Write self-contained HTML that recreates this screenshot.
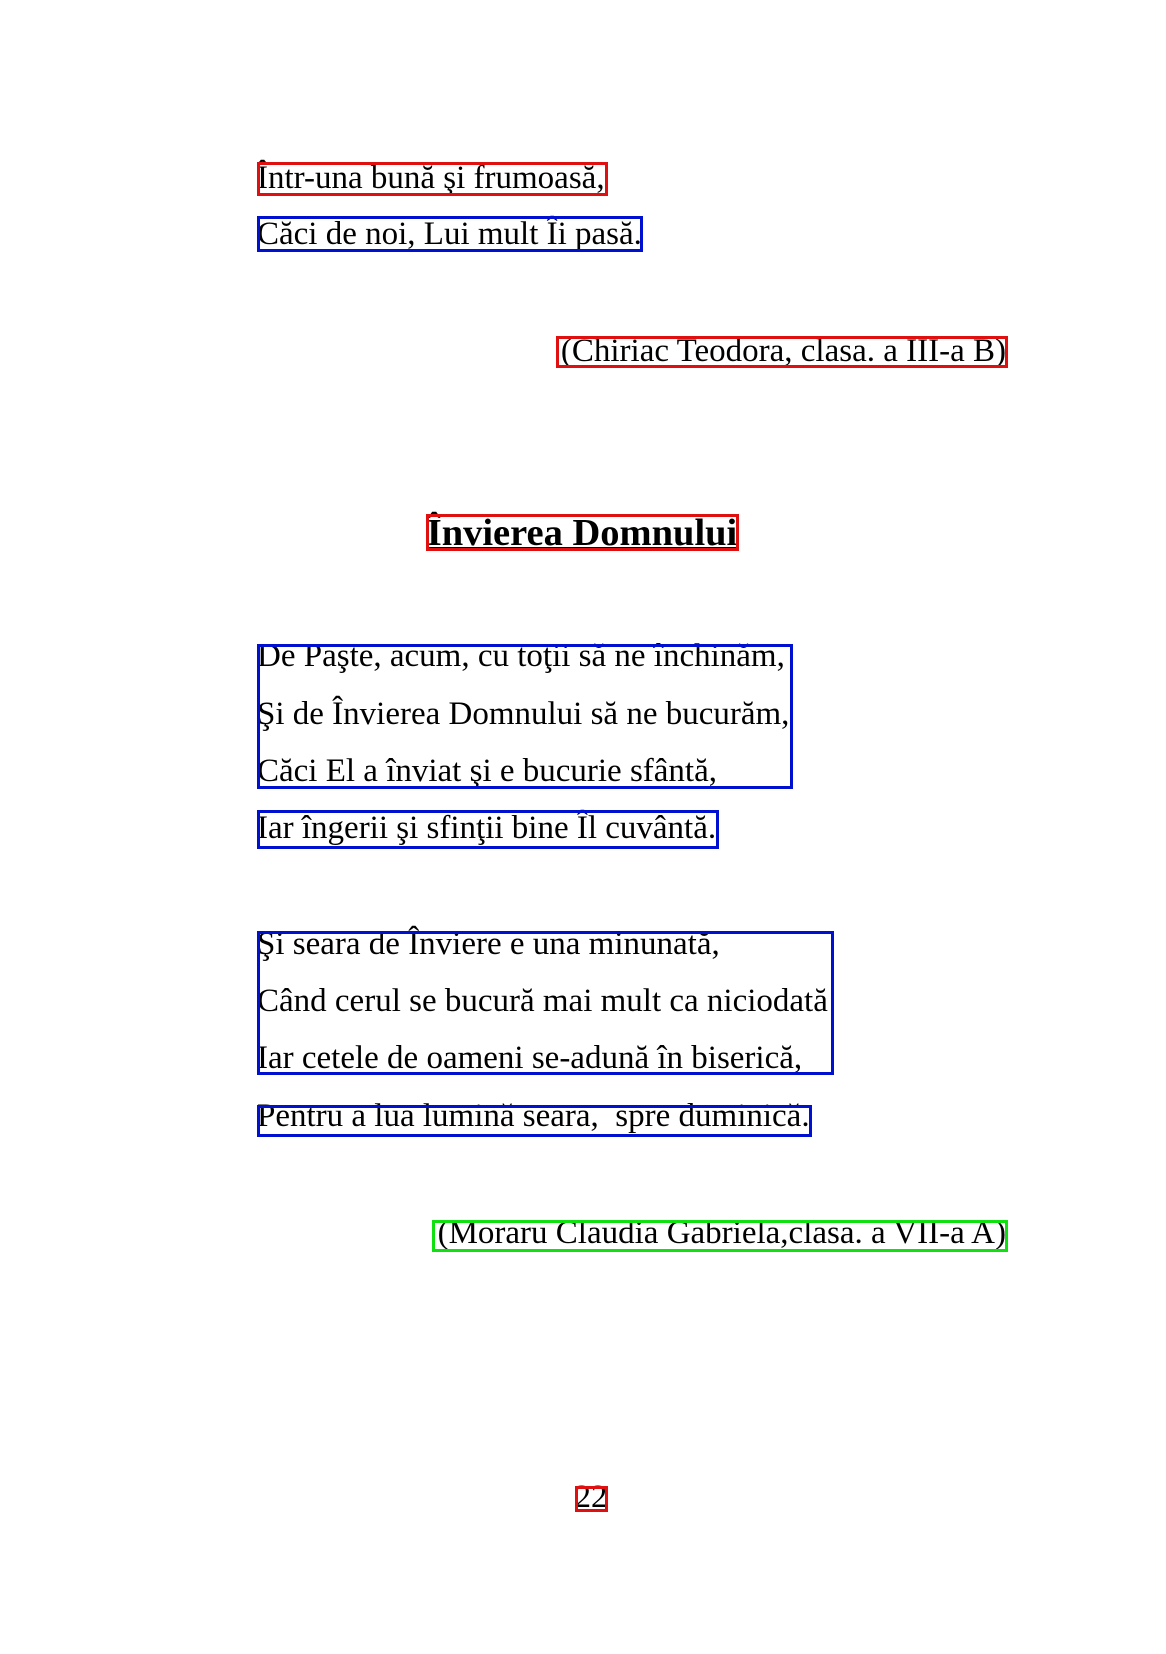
<!DOCTYPE html>
<html><head><meta charset="utf-8"><style>
html,body{margin:0;padding:0;background:#fff;width:1166px;height:1654px;overflow:hidden}
body{position:relative;font-family:"Liberation Serif","Times New Roman",serif;color:#000}
.l{position:absolute;left:257px;font-size:33px;line-height:36px;white-space:pre}
.r{position:absolute;right:160px;font-size:33px;line-height:36px;white-space:pre}
.t{position:absolute;left:0;width:1164px;text-align:center;font-size:38.5px;line-height:40px;font-weight:bold;text-decoration:underline}
.p{position:absolute;left:0;width:1182px;text-align:center;font-size:32.5px;line-height:36px}
.b{position:absolute;box-sizing:border-box;border:3px solid}
.R{border-color:#e01010}.B{border-color:#0010d0}.G{border-color:#10e010}
</style></head><body>
<div class="l" style="top:160px">Într-una bună şi frumoasă,</div>
<div class="l" style="top:216px">Căci de noi, Lui mult Îi pasă.</div>
<div class="r" style="top:333px">(Chiriac Teodora, clasa. a III-a B)</div>
<div class="t" style="top:513px">Învierea Domnului</div>
<div class="l" style="top:638px">De Paşte, acum, cu toţii să ne închinăm,</div>
<div class="l" style="top:696px">Şi de Învierea Domnului să ne bucurăm,</div>
<div class="l" style="top:753px">Căci El a înviat şi e bucurie sfântă,</div>
<div class="l" style="top:810px">Iar îngerii şi sfinţii bine Îl cuvântă.</div>
<div class="l" style="top:926px">Şi seara de Înviere e una minunată,</div>
<div class="l" style="top:983px">Când cerul se bucură mai mult ca niciodată</div>
<div class="l" style="top:1040px">Iar cetele de oameni se-adună în biserică,</div>
<div class="l" style="top:1098px">Pentru a lua lumină seara,  spre duminică.</div>
<div class="r" style="top:1215px">(Moraru Claudia Gabriela,clasa. a VII-a A)</div>
<div class="p" style="top:1479px">22</div>

<div class="b R" style="left:257px;top:162px;width:351px;height:34px"></div>
<div class="b B" style="left:257px;top:216px;width:386px;height:36px"></div>
<div class="b R" style="left:556px;top:336px;width:452px;height:32px"></div>
<div class="b R" style="left:426px;top:514px;width:313px;height:37px"></div>
<div class="b B" style="left:257px;top:644px;width:536px;height:145px"></div>
<div class="b B" style="left:257px;top:810px;width:462px;height:39px"></div>
<div class="b B" style="left:257px;top:931px;width:577px;height:144px"></div>
<div class="b B" style="left:257px;top:1105px;width:555px;height:32px"></div>
<div class="b G" style="left:432px;top:1220px;width:576px;height:32px"></div>
<div class="b R" style="left:575px;top:1486px;width:33px;height:26px"></div>
</body></html>
